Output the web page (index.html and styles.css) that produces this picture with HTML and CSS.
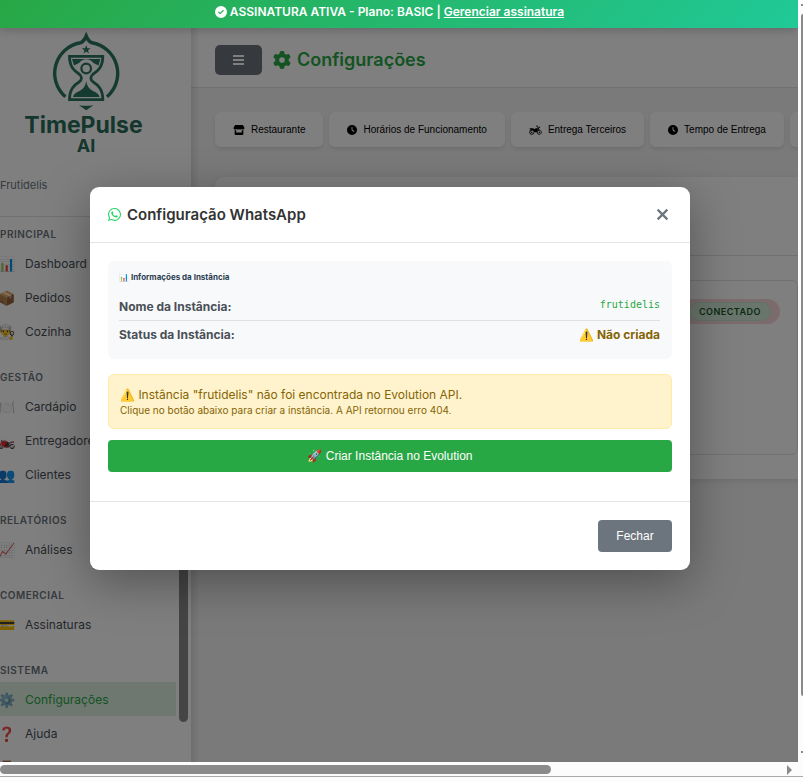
FILE: index.html
```html
<!DOCTYPE html>
<html lang="pt-BR">
<head>
<meta charset="utf-8">
<meta name="viewport" content="width=device-width, initial-scale=1">
<title>Configurações - TimePulse AI</title>
<link rel="stylesheet" href="styles.css">
</head>
<body>
<svg class="sprite" aria-hidden="true">
  <symbol id="i-check" viewBox="0 0 512 512"><path d="M256 512A256 256 0 1 0 256 0a256 256 0 1 0 0 512zM369 209L241 337c-9.400 9.400-24.600 9.400-33.900 0l-64-64c-9.400-9.400-9.400-24.600 0-33.900s24.600-9.400 33.900 0l47 47L335 175c9.400-9.400 24.600-9.400 33.900 0s9.400 24.600 0 33.900z"/></symbol>
  <symbol id="i-clock" viewBox="0 0 512 512"><path d="M256 0a256 256 0 1 1 0 512A256 256 0 1 1 256 0zM232 120l0 136c0 8 4 15.500 10.700 20l96 64c11 7.400 25.900 4.400 33.300-6.700s4.400-25.900-6.700-33.300L280 243.200 280 120c0-13.300-10.700-24-24-24s-24 10.700-24 24z"/></symbol>
  <symbol id="i-gear" viewBox="0 0 512 512"><path d="M495.900 166.600c3.200 8.700 .5 18.400-6.400 24.600l-43.300 39.400c1.100 8.300 1.700 16.800 1.700 25.400s-.6 17.100-1.700 25.400l43.300 39.400c6.900 6.200 9.600 15.900 6.400 24.600c-4.400 11.900-9.700 23.300-15.800 34.300l-4.700 8.100c-6.600 11-14 21.400-22.100 31.200c-5.900 7.200-15.700 9.600-24.500 6.800l-55.700-17.700c-13.400 10.300-28.200 18.900-44 25.400l-12.500 57.100c-2 9.100-9 16.300-18.200 17.800c-13.800 2.300-28 3.500-42.500 3.500s-28.700-1.200-42.500-3.500c-9.200-1.500-16.200-8.700-18.200-17.800l-12.500-57.100c-15.800-6.500-30.600-15.100-44-25.400L83.100 425.900c-8.800 2.800-18.600 .3-24.500-6.800c-8.100-9.800-15.500-20.200-22.100-31.200l-4.700-8.100c-6.100-11-11.400-22.400-15.800-34.300c-3.200-8.700-.5-18.400 6.400-24.600l43.300-39.400C64.600 273.100 64 264.600 64 256s.6-17.100 1.700-25.400L22.400 191.200c-6.900-6.200-9.600-15.900-6.400-24.600c4.400-11.900 9.700-23.300 15.800-34.300l4.700-8.100c6.600-11 14-21.400 22.100-31.200c5.900-7.200 15.700-9.600 24.500-6.800l55.700 17.700c13.400-10.300 28.200-18.900 44-25.400l12.500-57.100c2-9.100 9-16.300 18.200-17.800C227.300 1.200 241.500 0 256 0s28.700 1.200 42.500 3.500c9.200 1.500 16.200 8.700 18.200 17.800l12.500 57.100c15.800 6.500 30.600 15.100 44 25.400l55.700-17.700c8.800-2.800 18.600-.3 24.500 6.800c8.100 9.800 15.500 20.200 22.100 31.200l4.700 8.100c6.100 11 11.400 22.400 15.800 34.300zM256 336a80 80 0 1 0 0-160 80 80 0 1 0 0 160z"/></symbol>
  <symbol id="i-store" viewBox="0 0 576 512"><path d="M110 0H466c12 0 23 6 29 16l59 94c30 48 4 115-53 123-49 6-81-20-90-34-31 46-93 46-123 0-31 46-93 46-123 0-10 15-43 40-90 34-57-8-83-75-53-123l59-94C87 6 98 0 110 0zM64 264c31 4 57-1 80-12v132H432V252c24 12 51 16 80 12V448c0 35-29 64-64 64H128c-35 0-64-29-64-64z"/></symbol>
  <symbol id="i-moto" viewBox="0 0 640 512"><path fill="none" stroke="currentColor" stroke-width="48" d="M128 272a104 104 0 1 0 104 104M512 272a104 104 0 1 0 2 0M352 56h72l88 216M470 150l90-48"/><path d="M24 160h130c60 0 92 26 110 56l64-56h112l36 80c-54 34-78 78-84 136H232c0-66-52-112-120-112-38 0-66 12-88 28v-40c24-18 54-30 90-30-8-8-20-10-34-10H24z"/><circle cx="128" cy="376" r="38"/><circle cx="512" cy="376" r="38"/></symbol>
  <symbol id="i-whatsapp" viewBox="0 0 448 512"><path d="M380.900 97.100C339 55.100 283.200 32 223.900 32c-122.400 0-222 99.600-222 222 0 39.100 10.200 77.300 29.600 111L0 480l117.700-30.900c32.400 17.700 68.900 27 106.100 27h.1c122.300 0 224.100-99.600 224.100-222 0-59.300-25.200-115-67.100-157zm-157 341.600c-33.200 0-65.700-8.900-94-25.700l-6.700-4-69.800 18.300L72 359.200l-4.400-7c-18.500-29.400-28.200-63.300-28.200-98.200 0-101.700 82.800-184.500 184.600-184.500 49.300 0 95.600 19.200 130.400 54.100 34.800 34.900 56.200 81.200 56.100 130.500 0 101.800-84.900 184.600-186.600 184.600zm101.200-138.200c-5.500-2.800-32.800-16.200-37.900-18-5.100-1.900-8.800-2.800-12.500 2.800-3.700 5.600-14.300 18-17.600 21.800-3.200 3.700-6.500 4.200-12 1.400-32.600-16.300-54-29.100-75.500-66-5.700-9.800 5.700-9.100 16.300-30.300 1.800-3.700.9-6.900-.5-9.700-1.400-2.800-12.500-30.100-17.100-41.200-4.500-10.800-9.100-9.300-12.500-9.500-3.200-.2-6.900-.2-10.600-.2-3.700 0-9.700 1.400-14.800 6.900-5.100 5.600-19.400 19-19.400 46.300 0 27.300 19.900 53.700 22.600 57.400 2.800 3.700 39.100 59.700 94.800 83.800 35.200 15.200 49 16.500 66.600 13.900 10.700-1.600 32.800-13.400 37.400-26.400 4.600-13 4.600-24.100 3.200-26.400-1.300-2.500-5-3.900-10.500-6.600z"/></symbol>
</svg>

<div class="shell">
  <div class="viewport">
    <header class="banner">
      <svg class="banner-icon"><use href="#i-check"/></svg>
      <span>ASSINATURA ATIVA - Plano: BASIC | <a href="#assinatura">Gerenciar assinatura</a></span>
    </header>

    <div class="app">
      <aside class="sidebar">
        <div class="sidebar-content">
          <div class="brand">
            <svg class="brand-mark" viewBox="50 30 72 84" aria-hidden="true">
              <path fill="none" stroke="currentColor" stroke-width="3.400" stroke-miterlimit="6" d="M65.400 96.800A31 31 0 0 1 80.500 42.800Q84 41.500 86.200 36Q88.400 41.500 91.900 42.800A31 31 0 0 1 107 96.800"/>
              <path d="M86.200 45l1.100 3.200h3.400l-2.700 2 1 3.300-2.800-2-2.800 2 1-3.300-2.700-2h3.400z"/>
              <path fill="none" stroke="currentColor" stroke-width="2.800" d="M69.500 56.300H102.800C102.800 67 98 71 93.200 74Q88.400 78 93.200 82C98 85 102.800 89 102.800 99.700H69.500C69.500 89 74.300 85 79.100 82Q83.900 78 79.100 74C74.300 71 69.500 67 69.500 56.300z"/>
              <path d="M72 59H100.300L98.500 65.500 93.500 63A9 9 0 0 0 79 63L74 65.500z"/>
              <circle cx="86.200" cy="68.500" r="4.800" fill="none" stroke="currentColor" stroke-width="2.200"/>
              <path d="M86.200 81Q87 88 93 91 99 93.500 99.500 97H73Q73.500 93.500 79.500 91 85.500 88 86.200 81z"/>
              <path d="M79 105.200Q86.200 106.200 93.500 105.200L86.200 110.200z"/>
            </svg>
            <div class="brand-name">TimePulse</div>
            <div class="brand-sub">AI</div>
          </div>
          <p class="account">Frutidelis</p>
          <nav class="nav">
            <h2>PRINCIPAL</h2>
            <a href="#dashboard"><span class="emoji">📊</span>Dashboard</a>
            <a href="#pedidos"><span class="emoji">📦</span>Pedidos</a>
            <a href="#cozinha"><span class="emoji">👨‍🍳</span>Cozinha</a>
            <h2>GESTÃO</h2>
            <a href="#cardapio"><span class="emoji">🍽️</span>Cardápio</a>
            <a href="#entregadores"><span class="emoji">🏍️</span>Entregadores</a>
            <a href="#clientes"><span class="emoji">👥</span>Clientes</a>
            <h2>RELATÓRIOS</h2>
            <a href="#analises"><span class="emoji">📈</span>Análises</a>
            <h2>COMERCIAL</h2>
            <a href="#assinaturas"><span class="emoji">💳</span>Assinaturas</a>
            <h2>SISTEMA</h2>
            <a class="active" href="#configuracoes"><span class="emoji">⚙️</span>Configurações</a>
            <a href="#ajuda"><span class="emoji">❓</span>Ajuda</a>
            <a href="#sair"><span class="emoji">🚪</span>Sair</a>
          </nav>
        </div>
        <div class="side-track"><div class="side-thumb"></div></div>
      </aside>

      <main class="main">
        <div class="topbar">
          <button class="menu-button" type="button" aria-label="Menu"><i></i><i></i><i></i></button>
          <h1><svg><use href="#i-gear"/></svg>Configurações</h1>
        </div>
        <div class="content">
          <div class="tabs">
            <button type="button"><svg class="store"><use href="#i-store"/></svg>Restaurante</button>
            <button type="button"><svg><use href="#i-clock"/></svg>Horários de Funcionamento</button>
            <button type="button"><svg class="wide"><use href="#i-moto"/></svg>Entrega Terceiros</button>
            <button type="button"><svg><use href="#i-clock"/></svg>Tempo de Entrega</button>
            <button type="button" aria-label="WhatsApp"><svg><use href="#i-whatsapp"/></svg></button>
          </div>
          <section class="card">
            <div class="card-head"></div>
            <div class="card-panel">
              <span class="status"><span>CONECTADO</span></span>
            </div>
          </section>
        </div>
      </main>
    </div>

    <div class="overlay">
      <section class="modal" role="dialog" aria-labelledby="modal-title">
        <header class="modal-head">
          <h2 id="modal-title"><svg><use href="#i-whatsapp"/></svg>Configuração WhatsApp</h2>
          <button class="close" type="button" aria-label="Fechar janela"><svg viewBox="0 0 12 12"><path d="M1.500 1.500l9 9M10.500 1.500l-9 9"/></svg></button>
        </header>
        <div class="modal-body">
          <div class="info">
            <h3>📊 Informações da Instância</h3>
            <dl>
              <div><dt>Nome da Instância:</dt><dd class="code">frutidelis</dd></div>
              <div><dt>Status da Instância:</dt><dd class="warn">⚠️ Não criada</dd></div>
            </dl>
          </div>
          <div class="alert">
            <p>⚠️ Instância "frutidelis" não foi encontrada no Evolution API.</p>
            <small>Clique no botão abaixo para criar a instância. A API retornou erro 404.</small>
          </div>
          <button class="create" type="button">🚀 Criar Instância no Evolution</button>
        </div>
        <footer class="modal-foot"><button type="button">Fechar</button></footer>
      </section>
    </div>
  </div>

  <div class="vscroll" aria-hidden="true"><i class="up"></i><div class="vthumb"></div><i class="down"></i></div>
  <div class="hscroll" aria-hidden="true"><div class="hthumb"></div><i class="right"></i></div>
</div>
</body>
</html>
```
FILE: styles.css
```css
* { box-sizing: border-box; }
body { margin: 0; background: #fcfcfc; font-family: Inter, "Liberation Sans", sans-serif; font-size: 12px; color: #495057; }
h1, h2, h3, p, dl, dd { margin: 0; }
a { color: inherit; text-decoration: none; }
button { border: 0; font-family: "Liberation Sans", sans-serif; cursor: pointer; }
svg { fill: currentColor; flex: none; }
.sprite { display: none; }

.shell { display: grid; grid-template: minmax(0, 1fr) 20px / minmax(0, 1fr) 5px; height: 100vh; overflow: hidden; }
.viewport { position: relative; display: flex; flex-direction: column; overflow: hidden; }

/* Subscription banner stays above the overlay */
.banner { position: relative; z-index: 3; flex: none; display: flex; justify-content: center; gap: 3px; height: 28px; padding: 4px 19px 0 0; background: linear-gradient(135deg, #28a745, #20c997); color: #fff; font-weight: 600; line-height: 16px; box-shadow: 0 2px 10px rgba(0, 0, 0, .2); white-space: nowrap; }
.banner a { text-decoration: underline; }
.banner-icon { width: 12px; height: 12px; margin-top: 2px; }

.app { flex: 1; min-height: 0; display: flex; }

/* Sidebar */
.sidebar { flex: none; display: flex; width: 191px; overflow: hidden; background: #fff; }
.sidebar-content { width: 176px; }
.brand { display: flex; flex-direction: column; align-items: center; height: 144px; padding-top: 2px; margin-right: 4px; color: #2a7561; font-weight: 700; }
.brand-mark { width: 72px; height: 84px; }
.brand-name { margin-right: 5px; font-size: 23px; line-height: 22px; color: #286c59; }
.brand-sub { font-size: 18px; line-height: 20px; color: #286c59; }
.account { width: 190px; height: 45px; padding-top: 5px; border-bottom: 1px solid #e0e3e6; font-size: 11px; line-height: 16px; color: #6c757d; }
.nav { display: flex; flex-direction: column; }
.nav h2 { padding: 11px 0 5px; margin-top: 11px; font-size: 10px; line-height: 14px; font-weight: 600; letter-spacing: .5px; color: #6c757d; }
.nav h2:first-child { margin-top: 0; padding-top: 10px; }
.nav a { display: flex; align-items: center; gap: 10px; height: 34px; white-space: nowrap; }
.nav .active { background: #dcefe1; color: #28a745; }
.emoji { flex: none; display: flex; justify-content: flex-end; width: 15px; font-size: 14px; }
.side-track { display: flex; flex-direction: column; justify-content: flex-end; width: 9px; margin-left: 3px; padding-bottom: 40px; }
.side-thumb { height: 45%; border-radius: 5px; background: #8b8b8b; }

/* Page */
.main { position: relative; flex: 1; min-width: 0; overflow: hidden; background: #f5f5f5; }
.main::before { content: ""; position: absolute; z-index: 1; inset: 0 auto 0 0; width: 9px; background: linear-gradient(90deg, rgba(0, 0, 0, .1), transparent); }
.topbar { display: flex; align-items: center; gap: 11px; height: 60px; padding: 4px 24px 0; background: #fff; border-bottom: 1px solid #e3e3e3; }
.menu-button { display: flex; flex-direction: column; align-items: center; justify-content: center; gap: 2px; width: 47px; height: 30px; border-radius: 5px; background: #6c757d; }
.menu-button i { width: 11px; height: 2px; background: #fff; }
h1 { display: flex; align-items: center; gap: 6px; font-size: 18px; line-height: 24px; font-weight: 600; color: #28a745; }
h1 svg { width: 18px; height: 18px; }
.content { padding: 24px; }
.tabs { display: flex; gap: 6px; margin-bottom: 30px; }
.tabs button { flex: none; display: flex; align-items: center; gap: 6px; height: 35px; padding: 0 18px; border-radius: 6px; background: #fff; color: #000; font-size: 10px; box-shadow: 0 2px 4px rgba(0, 0, 0, .1); }
.tabs svg { width: 10px; height: 10px; }
.tabs .store { width: 12px; }
.tabs .wide { width: 13px; }
.card { min-width: 600px; height: 302px; margin-right: -42px; border-radius: 9px; background: #fff; box-shadow: 0 2px 10px rgba(0, 0, 0, .1); }
.card-head { height: 79px; border-bottom: 1px solid #e3e3e3; }
.card-panel { display: flex; justify-content: flex-end; align-items: flex-start; height: 175px; margin: 24px 18px; padding: 18px 17px; border: 1px solid #e3e3e3; border-radius: 6px; }
.status { padding: 3px 9px; border-radius: 13px; background: #f8d7da; }
.status span { display: block; padding: 3px 9px; border-radius: 10px; border: 1px solid #c3e6cb; background: #d4edda; color: #155724; font-size: 9px; line-height: 11px; font-weight: 600; letter-spacing: .5px; }

/* Dialog */
.overlay { position: absolute; z-index: 2; inset: 0; display: flex; align-items: center; justify-content: center; padding: 0 18px 5px 0; background: rgba(0, 0, 0, .5); }
.modal { width: 600px; max-width: 90%; border-radius: 9px; background: #fff; box-shadow: 0 12px 48px rgba(0, 0, 0, .35); }
.modal-head { display: flex; align-items: center; justify-content: space-between; height: 56px; padding: 0 18px; border-bottom: 1px solid #e5e5e5; }
.modal-head h2 { display: flex; align-items: center; gap: 6px; font-size: 15px; font-weight: 600; color: #333; }
.modal-head svg { width: 13px; height: 15px; color: #25d366; }
.modal-head .close { display: flex; padding: 3px; background: none; }
.close svg { width: 13px; height: 13px; fill: none; stroke: #6c757d; stroke-width: 2; }
.modal-body { padding: 18px 18px 29px; }
.info { height: 98px; padding: 11px 12px 11px 11px; margin-bottom: 15px; border-radius: 6px; background: #f8f9fa; }
.info h3 { margin-bottom: 11px; font-size: 8px; line-height: 10px; font-weight: 700; color: #2c3e50; }
.info dl div { display: flex; justify-content: space-between; height: 28px; padding-top: 5px; line-height: 18px; }
.info dl div:first-child { border-bottom: 1px solid #dee2e6; }
.info dt { font-weight: 700; }
.warn { font-weight: 700; color: #856404; }
.code { font: 10px/14px "DejaVu Sans Mono", monospace; color: #28a745; }
.alert { height: 55px; padding: 12px 11px; margin-bottom: 11px; border: 1px solid #ffeaa7; border-radius: 6px; background: #fff3cd; color: #856404; }
.alert p { line-height: 16px; }
.alert small { display: block; font-size: 10px; line-height: 15px; }
.create { width: 100%; height: 32px; border-radius: 4px; background: #28a745; color: #fff; font-size: 12px; }
.modal-foot { display: flex; justify-content: flex-end; padding: 18px; border-top: 1px solid #e5e5e5; }
.modal-foot button { min-width: 74px; height: 32px; padding: 0 18px; border-radius: 4px; background: #6c757d; color: #fff; font-size: 12px; }

/* Window scroll bars */
.vscroll { display: flex; flex-direction: column; align-items: flex-end; padding: 4px 0 9px; overflow: hidden; }
.vthumb { width: 2px; height: 91%; margin-top: 8px; background: #8b8b8b; border-radius: 2px 0 0 2px; }
.up, .down { width: 2px; height: 2px; background: #8b8b8b; }
.down { margin-top: auto; }
.hscroll { grid-column: 1 / -1; display: flex; justify-content: space-between; height: 15px; padding: 3px 11px 3px 0; border-bottom: 1px solid #aaa; }
.hthumb { width: 69.6%; height: 9px; border-radius: 5px; background: #8b8b8b; }
.right { height: 0; border: solid transparent; border-width: 5px 0 5px 5px; border-left-color: #8b8b8b; }
```
